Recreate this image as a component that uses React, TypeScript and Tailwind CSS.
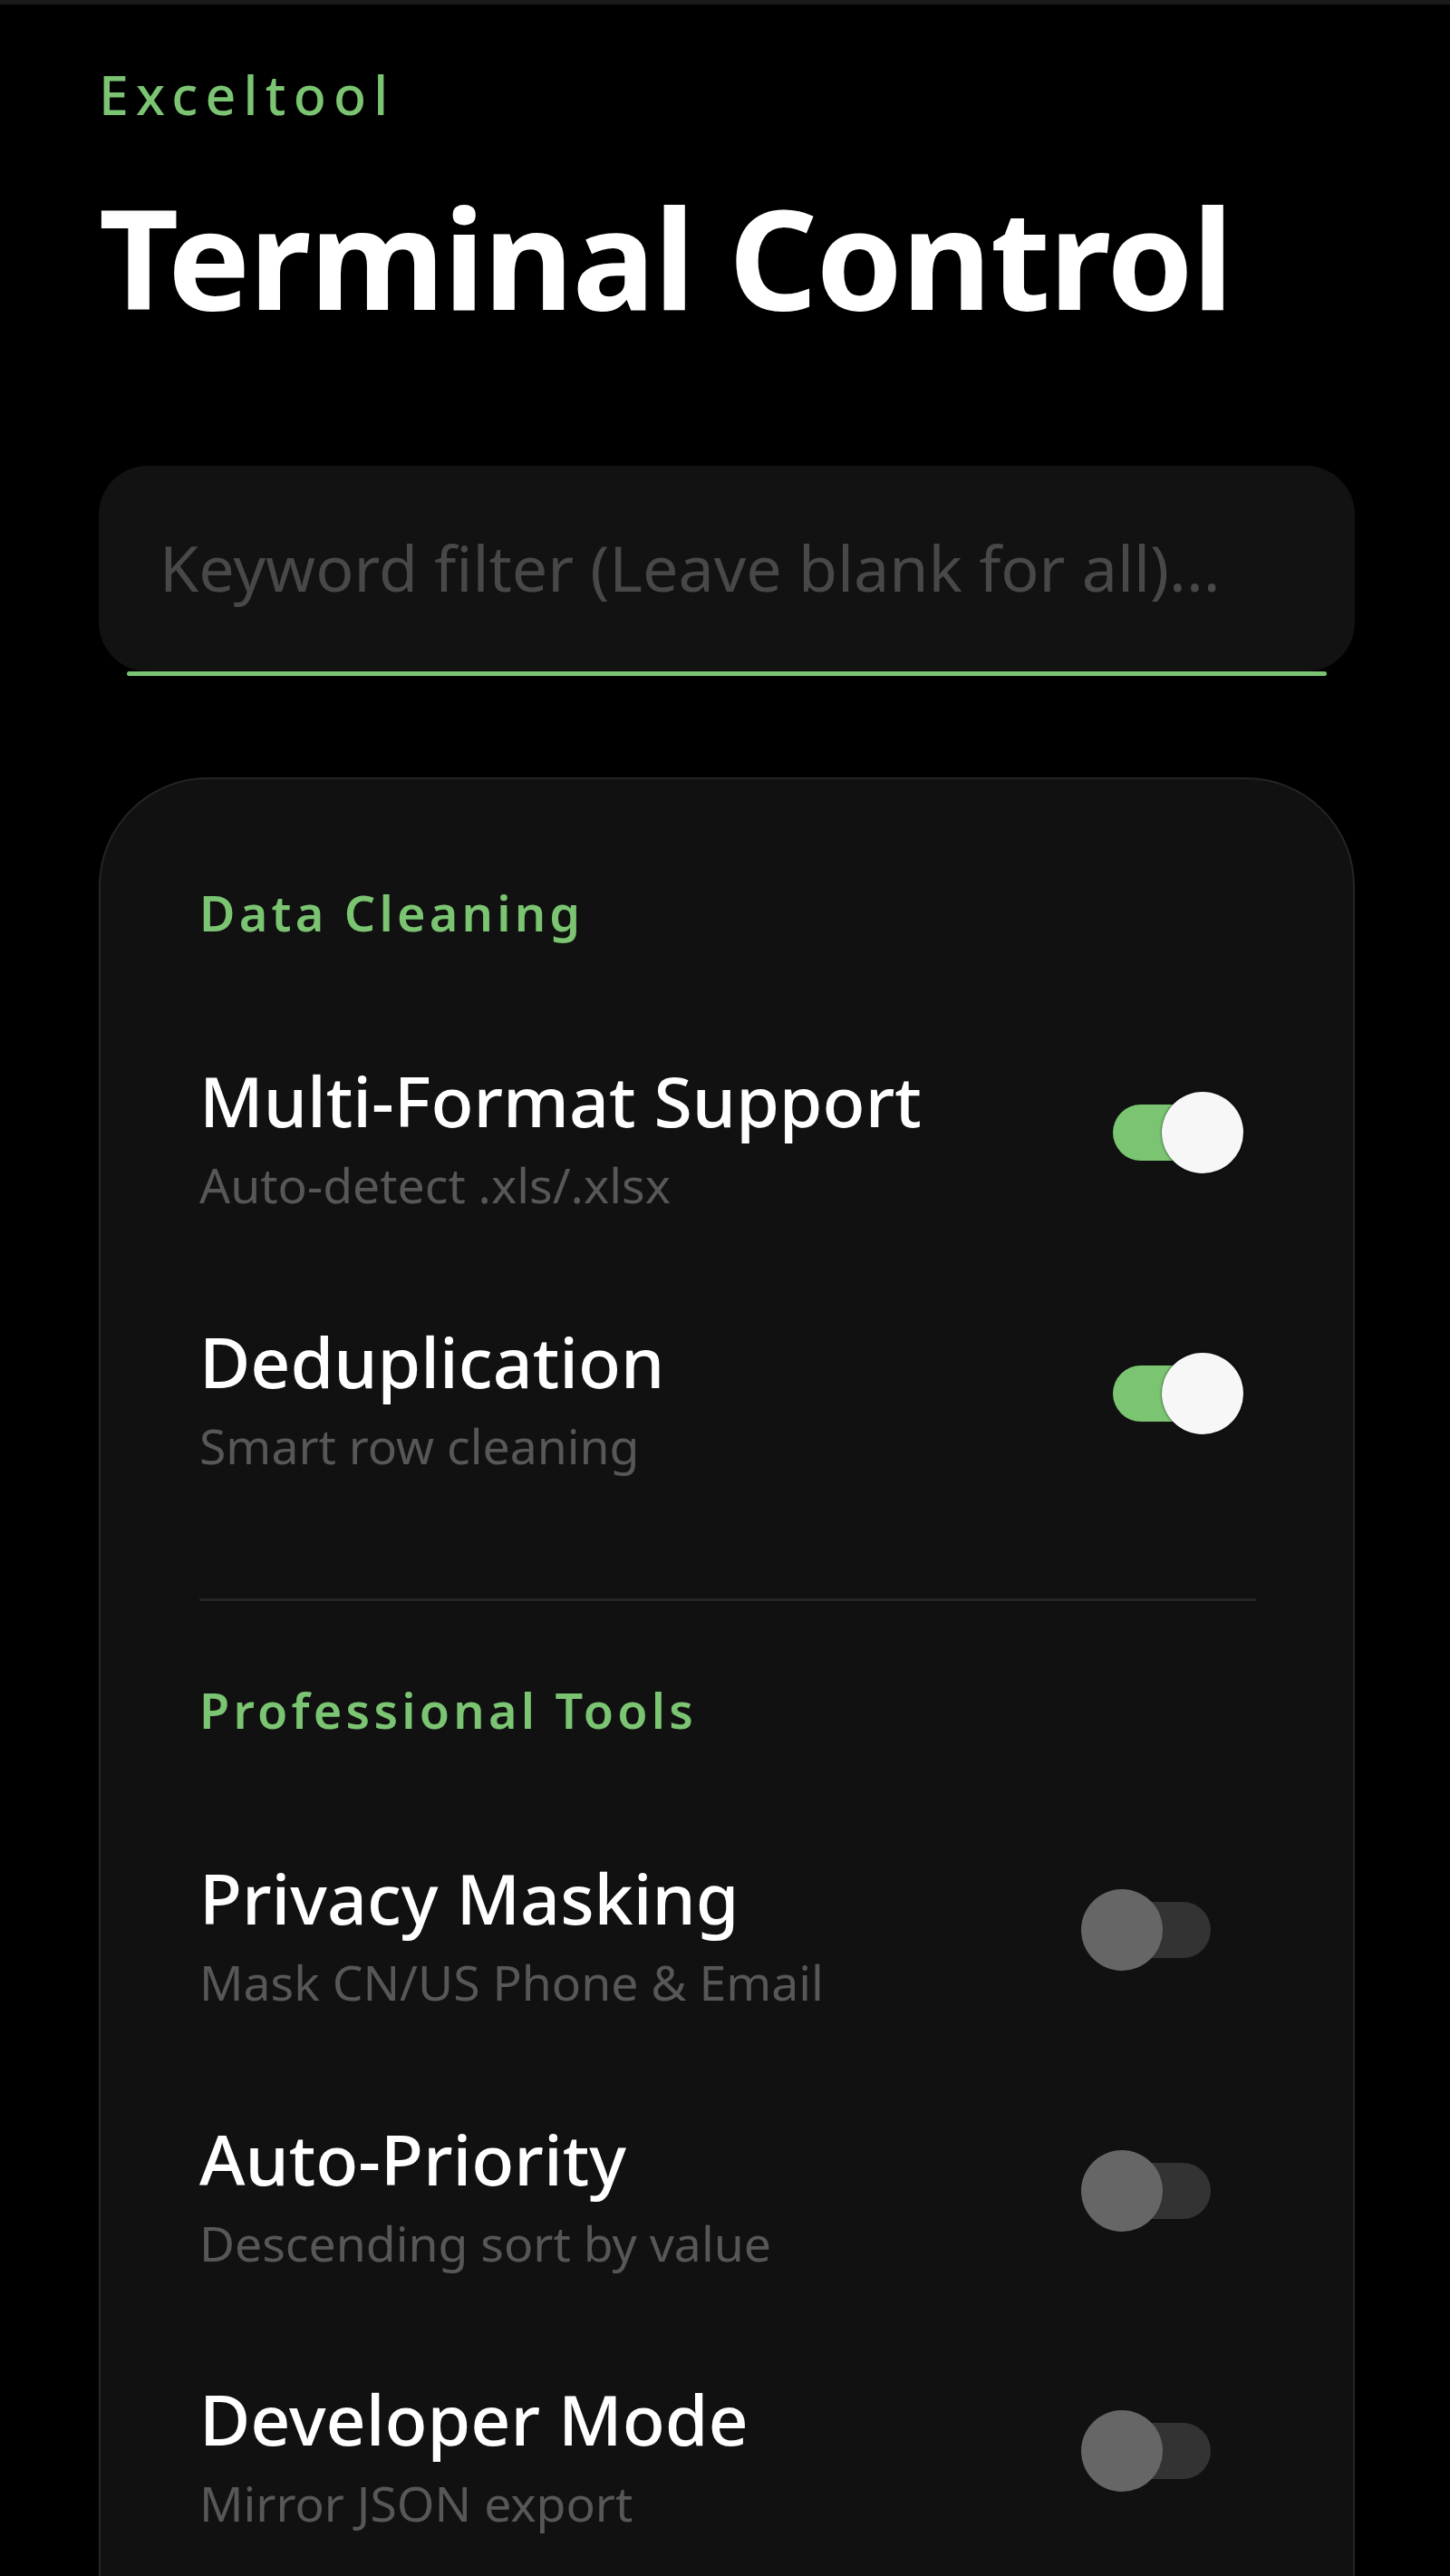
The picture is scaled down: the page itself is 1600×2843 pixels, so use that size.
import React, { useState } from 'react';

type Option = {
  id: string;
  title: string;
  desc: string;
  on: boolean;
};

type Section = {
  name: string;
  options: Option[];
};

const SECTIONS: Section[] = [
  {
    name: 'Data Cleaning',
    options: [
      { id: 'multi', title: 'Multi-Format Support', desc: 'Auto-detect .xls/.xlsx', on: true },
      { id: 'dedup', title: 'Deduplication', desc: 'Smart row cleaning', on: true },
    ],
  },
  {
    name: 'Professional Tools',
    options: [
      { id: 'privacy', title: 'Privacy Masking', desc: 'Mask CN/US Phone & Email', on: false },
      { id: 'priority', title: 'Auto-Priority', desc: 'Descending sort by value', on: false },
      { id: 'dev', title: 'Developer Mode', desc: 'Mirror JSON export', on: false },
    ],
  },
];

const Switch: React.FC<{ on: boolean; onToggle: () => void }> = ({ on, onToggle }) => (
  <button
    onClick={onToggle}
    className="relative w-[179px] h-[90px] shrink-0 mr-[14px] mb-[10px]"
  >
    <div
      className={`absolute left-[35px] top-[14px] w-[108px] h-[62px] rounded-full ${
        on ? 'bg-[#7ac472]' : 'bg-[#333333]'
      }`}
    />
    <div
      className={`absolute top-0 w-[90px] h-[90px] rounded-full ${
        on
          ? 'right-0 bg-[#f7f7f7] shadow-[0_0_3px_rgba(0,0,0,0.7)]'
          : 'left-0 bg-[#666666]'
      }`}
    />
  </button>
);

export default function App() {
  const [keyword, setKeyword] = useState('');
  const [state, setState] = useState<Record<string, boolean>>(() => {
    const s: Record<string, boolean> = {};
    SECTIONS.forEach(sec => sec.options.forEach(o => (s[o.id] = o.on)));
    return s;
  });

  const toggle = (id: string) => setState(prev => ({ ...prev, [id]: !prev[id] }));

  return (
    <div className="h-[2843px] overflow-hidden bg-black font-['Noto_Sans',sans-serif]">
      {/* status strip */}
      <div className="h-[5px] bg-[#1a1a1a]" />

      <div className="pl-[109px] pr-[105px]">
        {/* Header */}
        <div className="pt-[70px] text-[59px] leading-none font-medium tracking-[0.14em] text-[#7ac472]">
          Exceltool
        </div>
        <h1 className="mt-[72px] text-[153px] leading-none font-bold tracking-[-0.01em] text-white">
          Terminal Control
        </h1>

        {/* Search */}
        <div className="mt-[155px] flex flex-col">
          <div className="h-[227px] rounded-[54px] bg-[#121212] flex items-center pl-[67px] pr-[40px]">
            <input
              type="text"
              value={keyword}
              onChange={e => setKeyword(e.target.value)}
              placeholder="Keyword filter (Leave blank for all)..."
              className="w-full bg-transparent outline-none text-[70px] leading-none text-[#cccccc] placeholder:text-[#484848] mb-[4px]"
            />
          </div>
          <div className="mx-[31px] h-[5px] rounded-full bg-[#7ac472]" />
        </div>

        {/* Options card */}
        <div className="mt-[112px] h-[2200px] rounded-[120px] border-2 border-[#252525] bg-[#111111] pt-[120px] pl-[109px] pr-[107px]">
          {SECTIONS.map((sec, si) => (
            <div key={sec.name}>
              {si > 0 && <div className="h-[3px] bg-[#252525] mt-[142px] mb-[93px]" />}
              <div className="text-[54px] leading-none font-semibold tracking-[0.078em] text-[#7ac472]">
                {sec.name}
              </div>
              <div className="mt-[142px] flex flex-col gap-[129px]">
                {sec.options.map(opt => (
                  <div key={opt.id} className="flex items-center justify-between">
                    <div className="flex flex-col">
                      <span className="text-[77px] leading-none font-medium text-white">
                        {opt.title}
                      </span>
                      <span className="mt-[28px] text-[53.5px] leading-none text-[#575757]">
                        {opt.desc}
                      </span>
                    </div>
                    <Switch on={state[opt.id]} onToggle={() => toggle(opt.id)} />
                  </div>
                ))}
              </div>
            </div>
          ))}
        </div>
      </div>
    </div>
  );
}
